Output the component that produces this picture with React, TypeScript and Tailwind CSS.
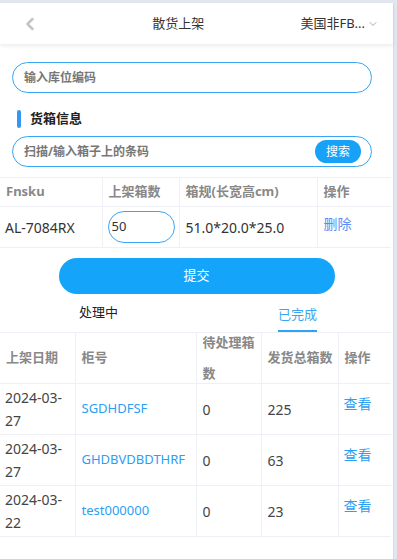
import { ChevronLeft, ChevronDown } from "lucide-react";

const rows = [
    { date: "2024-03-27", no: "SGDHDFSF", pending: "0", total: "225" },
    { date: "2024-03-27", no: "GHDBVDBDTHRF", pending: "0", total: "63" },
    { date: "2024-03-22", no: "test000000", pending: "0", total: "23" },
];

export default function App() {
    return (
        <div className="min-h-[559px] bg-[#e2e6f1] pt-[3px] flex" style={{ fontFamily: '"Noto Sans", "Noto Sans CJK SC", sans-serif' }}>
            <div className="w-[394px] min-h-[556px] bg-white border-r border-[#d8dce6] text-[#333]">
                {/* header */}
                <div className="h-[41px] flex items-center px-5 shadow-[0_2px_4px_rgba(0,0,0,0.08)] relative">
                    <ChevronLeft className="w-5 h-5 text-[#c4c4c4]" strokeWidth={3} />
                    <div className="flex-1 text-center text-[13px] text-[#333] pl-[16px]">散货上架</div>
                    <div className="flex items-center text-[13px] text-[#333] mr-[-6px]">
                        美国非FB...
                        <ChevronDown className="w-3 h-3 text-[#aaa] ml-[2px]" />
                    </div>
                </div>

                <div className="px-3 pt-[18px]">
                    <div className="h-[31px] w-[360px] rounded-full border border-[#3aa6f3] flex items-center px-[11px] text-[12px] font-bold text-[#777]">
                        输入库位编码
                    </div>
                    <div className="flex items-center mt-[17px] ml-[5px] h-[18px]">
                        <div className="w-[4px] h-[18px] rounded-full bg-[#3496f5]" />
                        <div className="ml-[9px] text-[13px] font-bold text-[#222]">货箱信息</div>
                    </div>
                    <div className="mt-[8px] h-[31px] w-[360px] rounded-full border border-[#3aa6f3] flex items-center pl-[11px] pr-[10px] text-[12px] font-bold text-[#777]">
                        <span className="flex-1">扫描/输入箱子上的条码</span>
                        <span className="h-[23px] w-[46px] rounded-full bg-[#17a2f7] text-white text-[12px] font-normal flex items-center justify-center">搜索</span>
                    </div>
                </div>

                <table className="mt-[10px] w-[391px] border-collapse table-fixed text-[13px]">
                    <colgroup>
                        <col className="w-[102px]" />
                        <col className="w-[77px]" />
                        <col className="w-[138px]" />
                        <col className="w-[74px]" />
                    </colgroup>
                    <thead>
                        <tr className="h-[29px] text-left text-[#888] font-bold border-y border-[#eef0f5]">
                            <th className="px-[6px] border-r border-[#eef0f5]">Fnsku</th>
                            <th className="px-[6px] border-r border-[#eef0f5]">上架箱数</th>
                            <th className="px-[6px] border-r border-[#eef0f5]">箱规(长宽高cm)</th>
                            <th className="px-[6px]">操作</th>
                        </tr>
                    </thead>
                    <tbody>
                        <tr className="h-[41px] border-b border-[#eef0f5] text-[14px] text-[#333]">
                            <td className="px-[5px] border-r border-[#eef0f5]">AL-7084RX</td>
                            <td className="px-[5px] border-r border-[#eef0f5]">
                                <div className="w-[67px] h-[32px] rounded-full border border-[#3aa6f3] flex items-center pl-[3px] text-[13px]">50</div>
                            </td>
                            <td className="px-[6px] border-r border-[#eef0f5]">51.0*20.0*25.0</td>
                            <td className="px-[6px] align-top pt-[6px] text-[#5a8ef7]">删除</td>
                        </tr>
                    </tbody>
                </table>

                <div className="flex justify-center mt-[10px]">
                    <div className="w-[276px] h-[36px] rounded-full bg-[#14a5fb] text-white text-[13px] flex items-center justify-center">提交</div>
                </div>

                <div className="flex h-[38px] text-[13px]">
                    <div className="w-[79px]" />
                    <div className="flex items-center text-[#222]">处理中</div>
                    <div className="w-[160px]" />
                    <div className="flex flex-col items-center justify-end">
                        <span className="text-[#3aa6f3] mb-[6px]">已完成</span>
                        <span className="w-[39px] h-[2px] bg-[#2ea3f5]" />
                    </div>
                </div>

                <table className="w-[391px] border-collapse table-fixed text-[14px]">
                    <colgroup>
                        <col className="w-[75px]" />
                        <col className="w-[121px]" />
                        <col className="w-[65px]" />
                        <col className="w-[77px]" />
                        <col className="w-[53px]" />
                    </colgroup>
                    <thead>
                        <tr className="h-[51px] text-left text-[#888] font-bold text-[13px] border-y border-[#eef0f5]">
                            <th className="px-[6px] border-r border-[#eef0f5]">上架日期</th>
                            <th className="px-[6px] border-r border-[#eef0f5]">柜号</th>
                            <th className="pl-[6px] pr-0 border-r border-[#eef0f5] whitespace-nowrap">
                                <div className="leading-[31px] -my-[6px]">待处理箱<br />数</div>
                            </th>
                            <th className="pl-[6px] pr-0 border-r border-[#eef0f5] whitespace-nowrap">发货总箱数</th>
                            <th className="px-[6px]">操作</th>
                        </tr>
                    </thead>
                    <tbody>
                        {rows.map((r) => (
                            <tr key={r.no} className="h-[51px] border-b border-[#eef0f5] text-[#444]">
                                <td className="px-[5px] border-r border-[#eef0f5]">
                                    <div className="leading-[23px]">{r.date.slice(0, 8)}<br />{r.date.slice(8)}</div>
                                </td>
                                <td className="px-[6px] border-r border-[#eef0f5] text-[#2ba0f3] text-[13px] whitespace-nowrap">{r.no}</td>
                                <td className="px-[6px] border-r border-[#eef0f5]">{r.pending}</td>
                                <td className="px-[6px] border-r border-[#eef0f5]">{r.total}</td>
                                <td className="px-[5px] align-top pt-[9px] text-[#2ba0f3]">查看</td>
                            </tr>
                        ))}
                    </tbody>
                </table>
            </div>
        </div>
    );
}
